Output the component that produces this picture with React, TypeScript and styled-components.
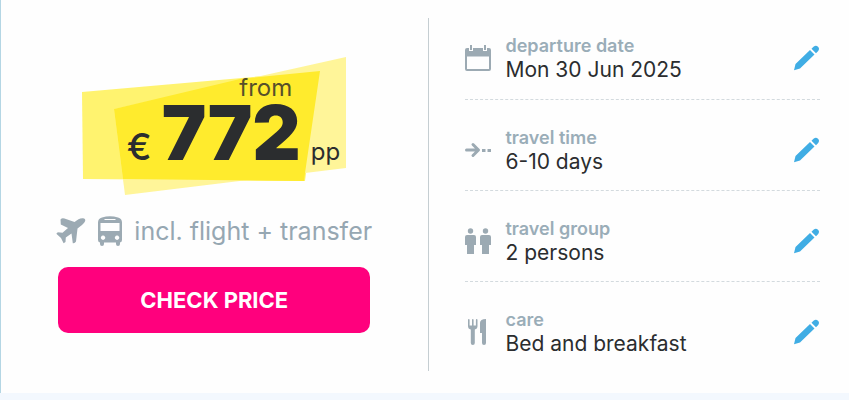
import React from "react";
import styled, { createGlobalStyle } from "styled-components";

const GlobalStyle = createGlobalStyle`
  * { box-sizing: border-box; }
  body {
    margin: 0;
    background: #f3f8fe;
    font-family: Inter, "Liberation Sans", sans-serif;
    color: #2b2d2f;
  }
`;

const Card = styled.main`
  display: grid;
  grid-template-columns: minmax(0, 429fr) minmax(0, 420fr);
  padding: 18px 0 22px;
  margin-bottom: 7px;
  background: #fefefe;
  border-left: 1px solid #b4d6e4;
`;

const Offer = styled.section`
  display: flex;
  flex-direction: column;
  align-items: center;
  padding: 39px 58px 0 57px;
  border-right: 1px solid #c5ced2;
`;

const PriceTag = styled.div`
  position: relative;
  display: flex;
  flex-direction: column;
  width: 264px;
  height: 138px;
  padding-top: 16px;
`;

const TagShape = styled.svg`
  position: absolute;
  inset: 0;
`;

const From = styled.span`
  position: relative;
  align-self: flex-end;
  margin-right: 54px;
  font-size: 24px;
  line-height: 30px;
  color: #57502a;
`;

const Price = styled.div`
  position: relative;
  display: flex;
  align-items: baseline;
  justify-content: flex-end;
  padding-right: 6px;
  line-height: 60px;
`;

const Currency = styled.span`
  margin-right: 10px;
  font-size: 37px;
  font-weight: 500;
`;

const Amount = styled.strong`
  font-size: 75px;
  font-weight: 900;
`;

const PerPerson = styled.span`
  margin-left: 10px;
  font-size: 24px;
`;

const Included = styled.div`
  display: flex;
  align-items: center;
  gap: 11px;
  height: 32px;
  margin-top: 20px;
  font-size: 25px;
  white-space: nowrap;
  color: #96a7b2;
`;

const CheckButton = styled.button`
  width: 100%;
  height: 66px;
  margin-top: 20px;
  border: 0;
  border-radius: 10px;
  background: #ff007d;
  color: #fff;
  font: 700 22px Inter, "Liberation Sans", sans-serif;
  cursor: pointer;
`;

const Details = styled.dl`
  margin: 0;
  padding: 0 29px 0 36px;
`;

const Row = styled.div`
  display: grid;
  grid-template-columns: 26px 1fr 26px;
  column-gap: 14px;
  align-items: center;
  height: 91px;
  padding-top: 9px;
  border-bottom: 1px dashed #d3dade;

  &:first-child {
    height: 82px;
    padding: 0 0 1px;
  }

  &:last-child {
    height: 89px;
    padding-top: 10px;
    border-bottom: 0;
  }
`;

const RowText = styled.div`
  line-height: 24px;
`;

const Label = styled.dt`
  font-size: 18px;
  font-weight: 600;
  color: #9aadb8;
`;

const Value = styled.dd`
  margin: 0;
  font-size: 21px;
`;

const EditButton = styled.button`
  display: flex;
  padding: 0;
  border: 0;
  background: none;
  color: #40ade4;
  cursor: pointer;
`;

const Glyph = styled.svg`
  display: block;
  flex: none;
  color: #9caab3;
`;

const PlaneIcon = () => (
  <Glyph width="30" height="30" viewBox="0 0 30 30" fill="currentColor" aria-hidden="true">
    <path d="M4.500 3.500Q6 1.500 8.500 2.500L18.500 6l4-2.700C25 2 28 2 29 3.300c1 1.600-.8 4-3 5.700l-4.500 3.500L20 25.500Q19 27.500 16.800 27.200L15.500 17.500 9.800 21.500 9.500 26 7.600 27.300 5 22 .3 17.800 1.800 16.200 6.500 16.800 12 12 4.800 8.600Z" />
  </Glyph>
);

const BusIcon = () => (
  <Glyph width="26" height="30" viewBox="0 0 26 30" fill="currentColor" aria-hidden="true">
    <path fillRule="evenodd" d="M5 1.500Q13-1 21 1.500 25 2.500 25 6.500V24q0 2-2 2.500V28q0 2-2 2t-2-2v-1.500H7V28q0 2-2 2t-2-2v-1.500Q1 26 1 24V6.500Q1 2.500 5 1.500ZM7.500 3v1h11V3ZM3.500 7v8h19V7ZM6 19.500a2.200 2.200 0 1 0 .1 0ZM20 19.500a2.200 2.200 0 1 0 .1 0Z" />
  </Glyph>
);

const CalendarIcon = () => (
  <Glyph width="26" height="28" viewBox="0 0 26 28" fill="currentColor" aria-hidden="true">
    <path fillRule="evenodd" d="M2 4h2v3h4V4h10v3h4V4h2q2 0 2 2v19q0 2-2 2H2q-2 0-2-2V6q0-2 2-2ZM2 12.500V25h22V12.500Z" />
    <path d="M5 1h2v5H5ZM19 1h2v5h-2Z" />
  </Glyph>
);

const ArrowIcon = () => (
  <Glyph width="26" height="16" viewBox="0 0 26 16" aria-hidden="true">
    <path d="M1.500 8H13M8 2.500 13.500 8 8 13.500" fill="none" stroke="currentColor" strokeWidth="3" strokeLinecap="round" strokeLinejoin="round" />
    <path d="M17 7h3.500v3H17ZM22.500 7H26v3h-3.500Z" fill="currentColor" />
  </Glyph>
);

const PeopleIcon = () => (
  <Glyph width="26" height="26" viewBox="0 0 26 26" fill="currentColor" aria-hidden="true">
    <circle cx="5.500" cy="3" r="2.700" />
    <circle cx="20.500" cy="3" r="2.700" />
    <path d="M2 7h7q2 0 2 2v8H9v9H2v-9H0V9q0-2 2-2ZM17 7h7q2 0 2 2v8h-2v9h-7v-9h-2V9q0-2 2-2Z" />
  </Glyph>
);

const CutleryIcon = () => (
  <Glyph width="26" height="28" viewBox="0 0 26 28" fill="currentColor" aria-hidden="true">
    <path d="M3 2v6q0 3 2.800 3.500V25q0 2 2 2t2-2V11.500Q12.500 11 12.500 8V2q0-1-.8-1t-.8 1v5.500H8.600V2q0-1-.8-1T7 2v5.500H4.600V2q0-1-.8-1T3 2ZM16.500 2Q18 1 21 1v24q0 2-2 2t-2-2V15h-2V5q0-2 1.500-3Z" />
  </Glyph>
);

const PencilIcon = () => (
  <svg width="26" height="26" viewBox="0 0 26 26" fill="currentColor" aria-hidden="true">
    <path d="M16 5 20.500 9.500 6 23.500 0 25.300 1.500 19ZM17.500 3.700l2-2q2.500-2 4.500 0t0 4.500l-2 2Z" />
  </svg>
);

const details = [
  { label: "departure date", value: "Mon 30 Jun 2025", Icon: CalendarIcon },
  { label: "travel time", value: "6-10 days", Icon: ArrowIcon },
  { label: "travel group", value: "2 persons", Icon: PeopleIcon },
  { label: "care", value: "Bed and breakfast", Icon: CutleryIcon },
];

export default function App() {
  return (
    <>
      <GlobalStyle />
      <Card>
        <Offer>
          <PriceTag>
            <TagShape width="264" height="138" viewBox="0 0 264 138" aria-hidden="true">
              <path d="M0 35 238 14 223 124 1 122Z" fill="#fff36f" />
              <path d="M32 52 264 0V111L43 138Z" fill="#fff599" />
              <path d="M32 52 158 22 238 14 223 116 222 124 41 122Z" fill="#ffeb2d" />
            </TagShape>
            <From>from</From>
            <Price>
              <Currency>€</Currency>
              <Amount>772</Amount>
              <PerPerson>pp</PerPerson>
            </Price>
          </PriceTag>
          <Included>
            <PlaneIcon />
            <BusIcon />
            <span>incl. flight + transfer</span>
          </Included>
          <CheckButton type="button">CHECK PRICE</CheckButton>
        </Offer>
        <Details>
          {details.map(({ label, value, Icon }) => (
            <Row key={label}>
              <Icon />
              <RowText>
                <Label>{label}</Label>
                <Value>{value}</Value>
              </RowText>
              <EditButton type="button" aria-label={`Edit ${label}`}>
                <PencilIcon />
              </EditButton>
            </Row>
          ))}
        </Details>
      </Card>
    </>
  );
}
